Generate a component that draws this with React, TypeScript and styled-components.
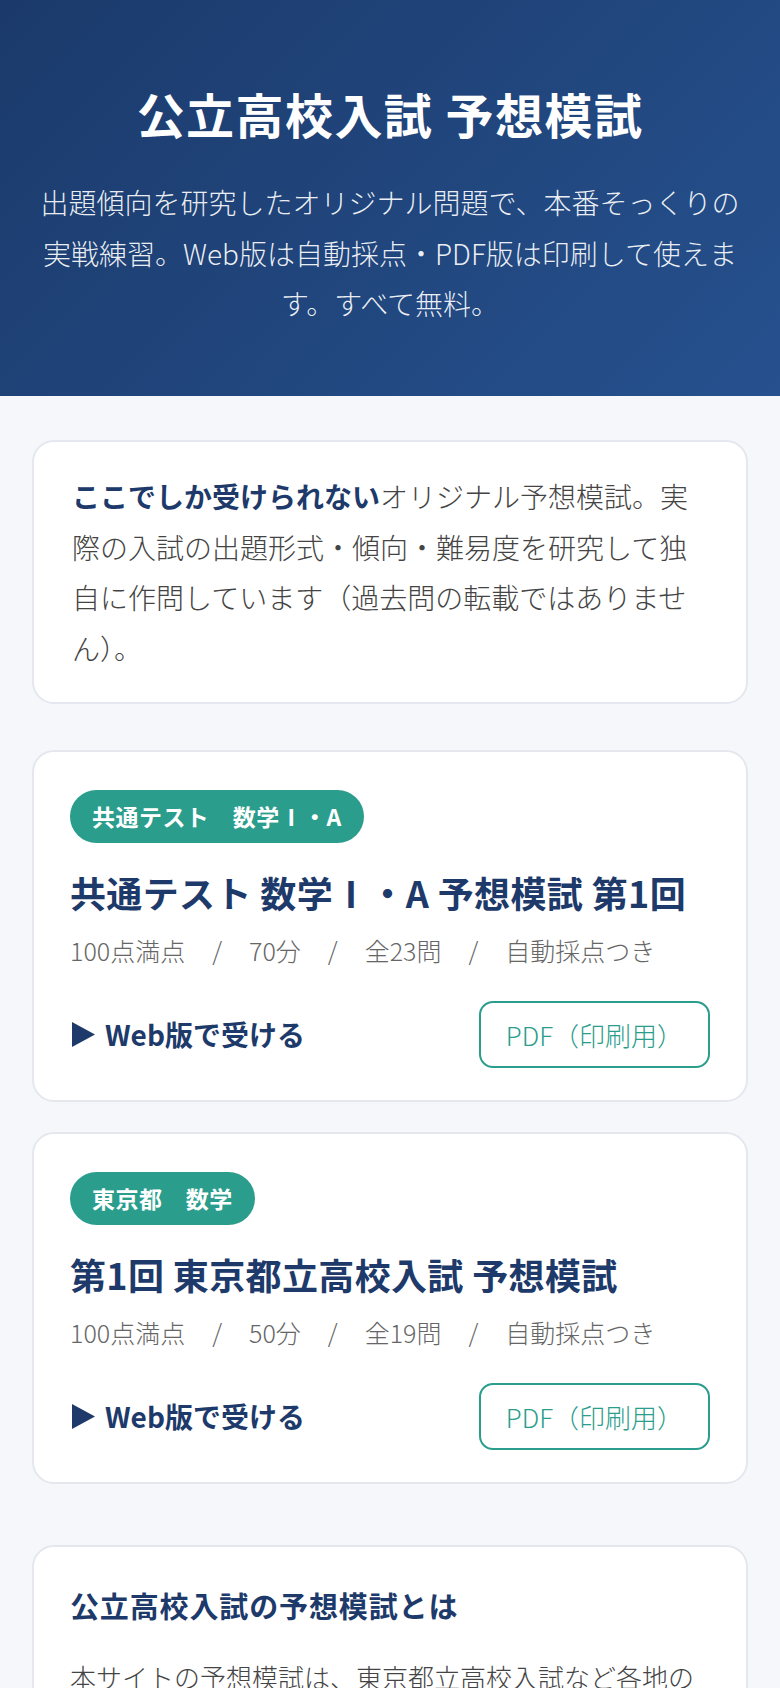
import styled, { createGlobalStyle } from 'styled-components';

const GlobalStyle = createGlobalStyle`
  * {
    box-sizing: border-box;
  }

  body {
    margin: 0;
    background: #f5f7fa;
    font-family: "Noto Sans CJK JP", "Noto Sans", sans-serif;
    color: #444;
  }
`;

const Hero = styled.header`
  background: linear-gradient(135deg, #1b3a6b 0%, #26518e 100%);
  color: #fff;
  text-align: center;
  padding: 80px 38px 68px;
`;

const HeroTitle = styled.h1`
  margin: 0;
  font-size: 48px;
  font-weight: 700;
  letter-spacing: 0.03em;
  line-height: 1.4;
`;

const HeroLead = styled.p`
  margin: 30px 0 0;
  font-size: 28px;
  font-weight: 300;
  line-height: 1.8;
  color: rgba(255, 255, 255, 0.92);
`;

const Main = styled.main`
  padding: 44px 32px 40px;
  display: flex;
  flex-direction: column;
`;

const Card = styled.section<{ $pad?: string }>`
  background: #fff;
  border: 2px solid #e4e8ee;
  border-radius: 22px;
  padding: ${p => p.$pad || '38px 36px 32px'};
  display: flex;
  flex-direction: column;
  align-items: flex-start;
`;

const IntroCard = styled(Card)`
  margin-bottom: 46px;
`;

const IntroText = styled.p`
  margin: 0;
  font-size: 28px;
  font-weight: 300;
  line-height: 1.8;
  color: #444;

  strong {
    font-weight: 700;
    color: #1d3a6a;
  }
`;

const ExamList = styled.div`
  display: flex;
  flex-direction: column;
  gap: 30px;
`;

const Badge = styled.span`
  display: inline-block;
  background: #2a9d8c;
  color: #fff;
  font-size: 23px;
  font-weight: 700;
  line-height: 33px;
  letter-spacing: 0.02em;
  padding: 10px 22px;
  border-radius: 999px;
`;

const ExamTitle = styled.h2`
  margin: 26px 0 0;
  font-size: 36px;
  font-weight: 700;
  line-height: 1.32;
  letter-spacing: 0.01em;
  color: #1d3a6a;
`;

const Meta = styled.div`
  margin-top: 15px;
  display: flex;
  gap: 27px;
  font-size: 25px;
  font-weight: 300;
  line-height: 1.54;
  color: #666;
`;

const Actions = styled.div`
  margin-top: 31px;
  width: 100%;
  display: flex;
  justify-content: space-between;
  align-items: center;
`;

const WebLink = styled.a`
  font-size: 28px;
  font-weight: 700;
  color: #1d3a6a;
  text-decoration: none;
  display: flex;
  align-items: center;
  gap: 10px;

  svg {
    margin-left: 2px;
  }
`;

const PdfButton = styled.a`
  height: 67px;
  padding: 0 25px;
  display: flex;
  align-items: center;
  border: 2px solid #2a9d8c;
  border-radius: 14px;
  font-size: 26px;
  font-weight: 300;
  color: #2a9d8c;
  text-decoration: none;
`;

const AboutCard = styled(Card)`
  margin-top: 61px;
`;

const AboutTitle = styled.h2`
  margin: 0 0 28px;
  font-size: 29px;
  font-weight: 700;
  letter-spacing: 0.03em;
  line-height: 1.4;
  color: #1d3a6a;
`;

const AboutText = styled.p`
  margin: 0;
  font-size: 26px;
  font-weight: 300;
  line-height: 1.8;
  color: #444;
`;

const exams = [
  {
    badge: '共通テスト　数学Ⅰ・A',
    title: '共通テスト 数学Ⅰ・A 予想模試 第1回',
    meta: ['100点満点', '70分', '全23問', '自動採点つき'],
  },
  {
    badge: '東京都　数学',
    title: '第1回 東京都立高校入試 予想模試',
    meta: ['100点満点', '50分', '全19問', '自動採点つき'],
  },
];

function Triangle() {
  return (
    <svg width="23" height="25" viewBox="0 0 23 25">
      <path d="M0 0 L23 12.5 L0 25 Z" fill="#1d3a6a" />
    </svg>
  );
}

export default function App() {
  return (
    <>
      <GlobalStyle />
      <Hero>
        <HeroTitle>公立高校入試 予想模試</HeroTitle>
        <HeroLead>
          出題傾向を研究したオリジナル問題で、本番そっくりの実戦練習。Web版は自動採点・PDF版は印刷して使えます。すべて無料。
        </HeroLead>
      </Hero>
      <Main>
        <IntroCard $pad="29px 38px">
          <IntroText>
            <strong>ここでしか受けられない</strong>
            オリジナル予想模試。実際の入試の出題形式・傾向・難易度を研究して独自に作問しています（過去問の転載ではありません）。
          </IntroText>
        </IntroCard>

        <ExamList>
          {exams.map(exam => (
            <Card key={exam.title}>
              <Badge>{exam.badge}</Badge>
              <ExamTitle>{exam.title}</ExamTitle>
              <Meta>
                {exam.meta.map((m, i) => (
                  <>
                    {i > 0 && <span>/</span>}
                    <span>{m}</span>
                  </>
                ))}
              </Meta>
              <Actions>
                <WebLink href="#">
                  <Triangle />
                  Web版で受ける
                </WebLink>
                <PdfButton href="#">PDF（印刷用）</PdfButton>
              </Actions>
            </Card>
          ))}
        </ExamList>

        <AboutCard $pad="38px 36px">
          <AboutTitle>公立高校入試の予想模試とは</AboutTitle>
          <AboutText>
            本サイトの予想模試は、東京都立高校入試など各地の公立高校入試の出題傾向を分析し、本番と同じ形式・分量・難易度で作成したオリジナル問題です。
          </AboutText>
        </AboutCard>
      </Main>
    </>
  );
}
